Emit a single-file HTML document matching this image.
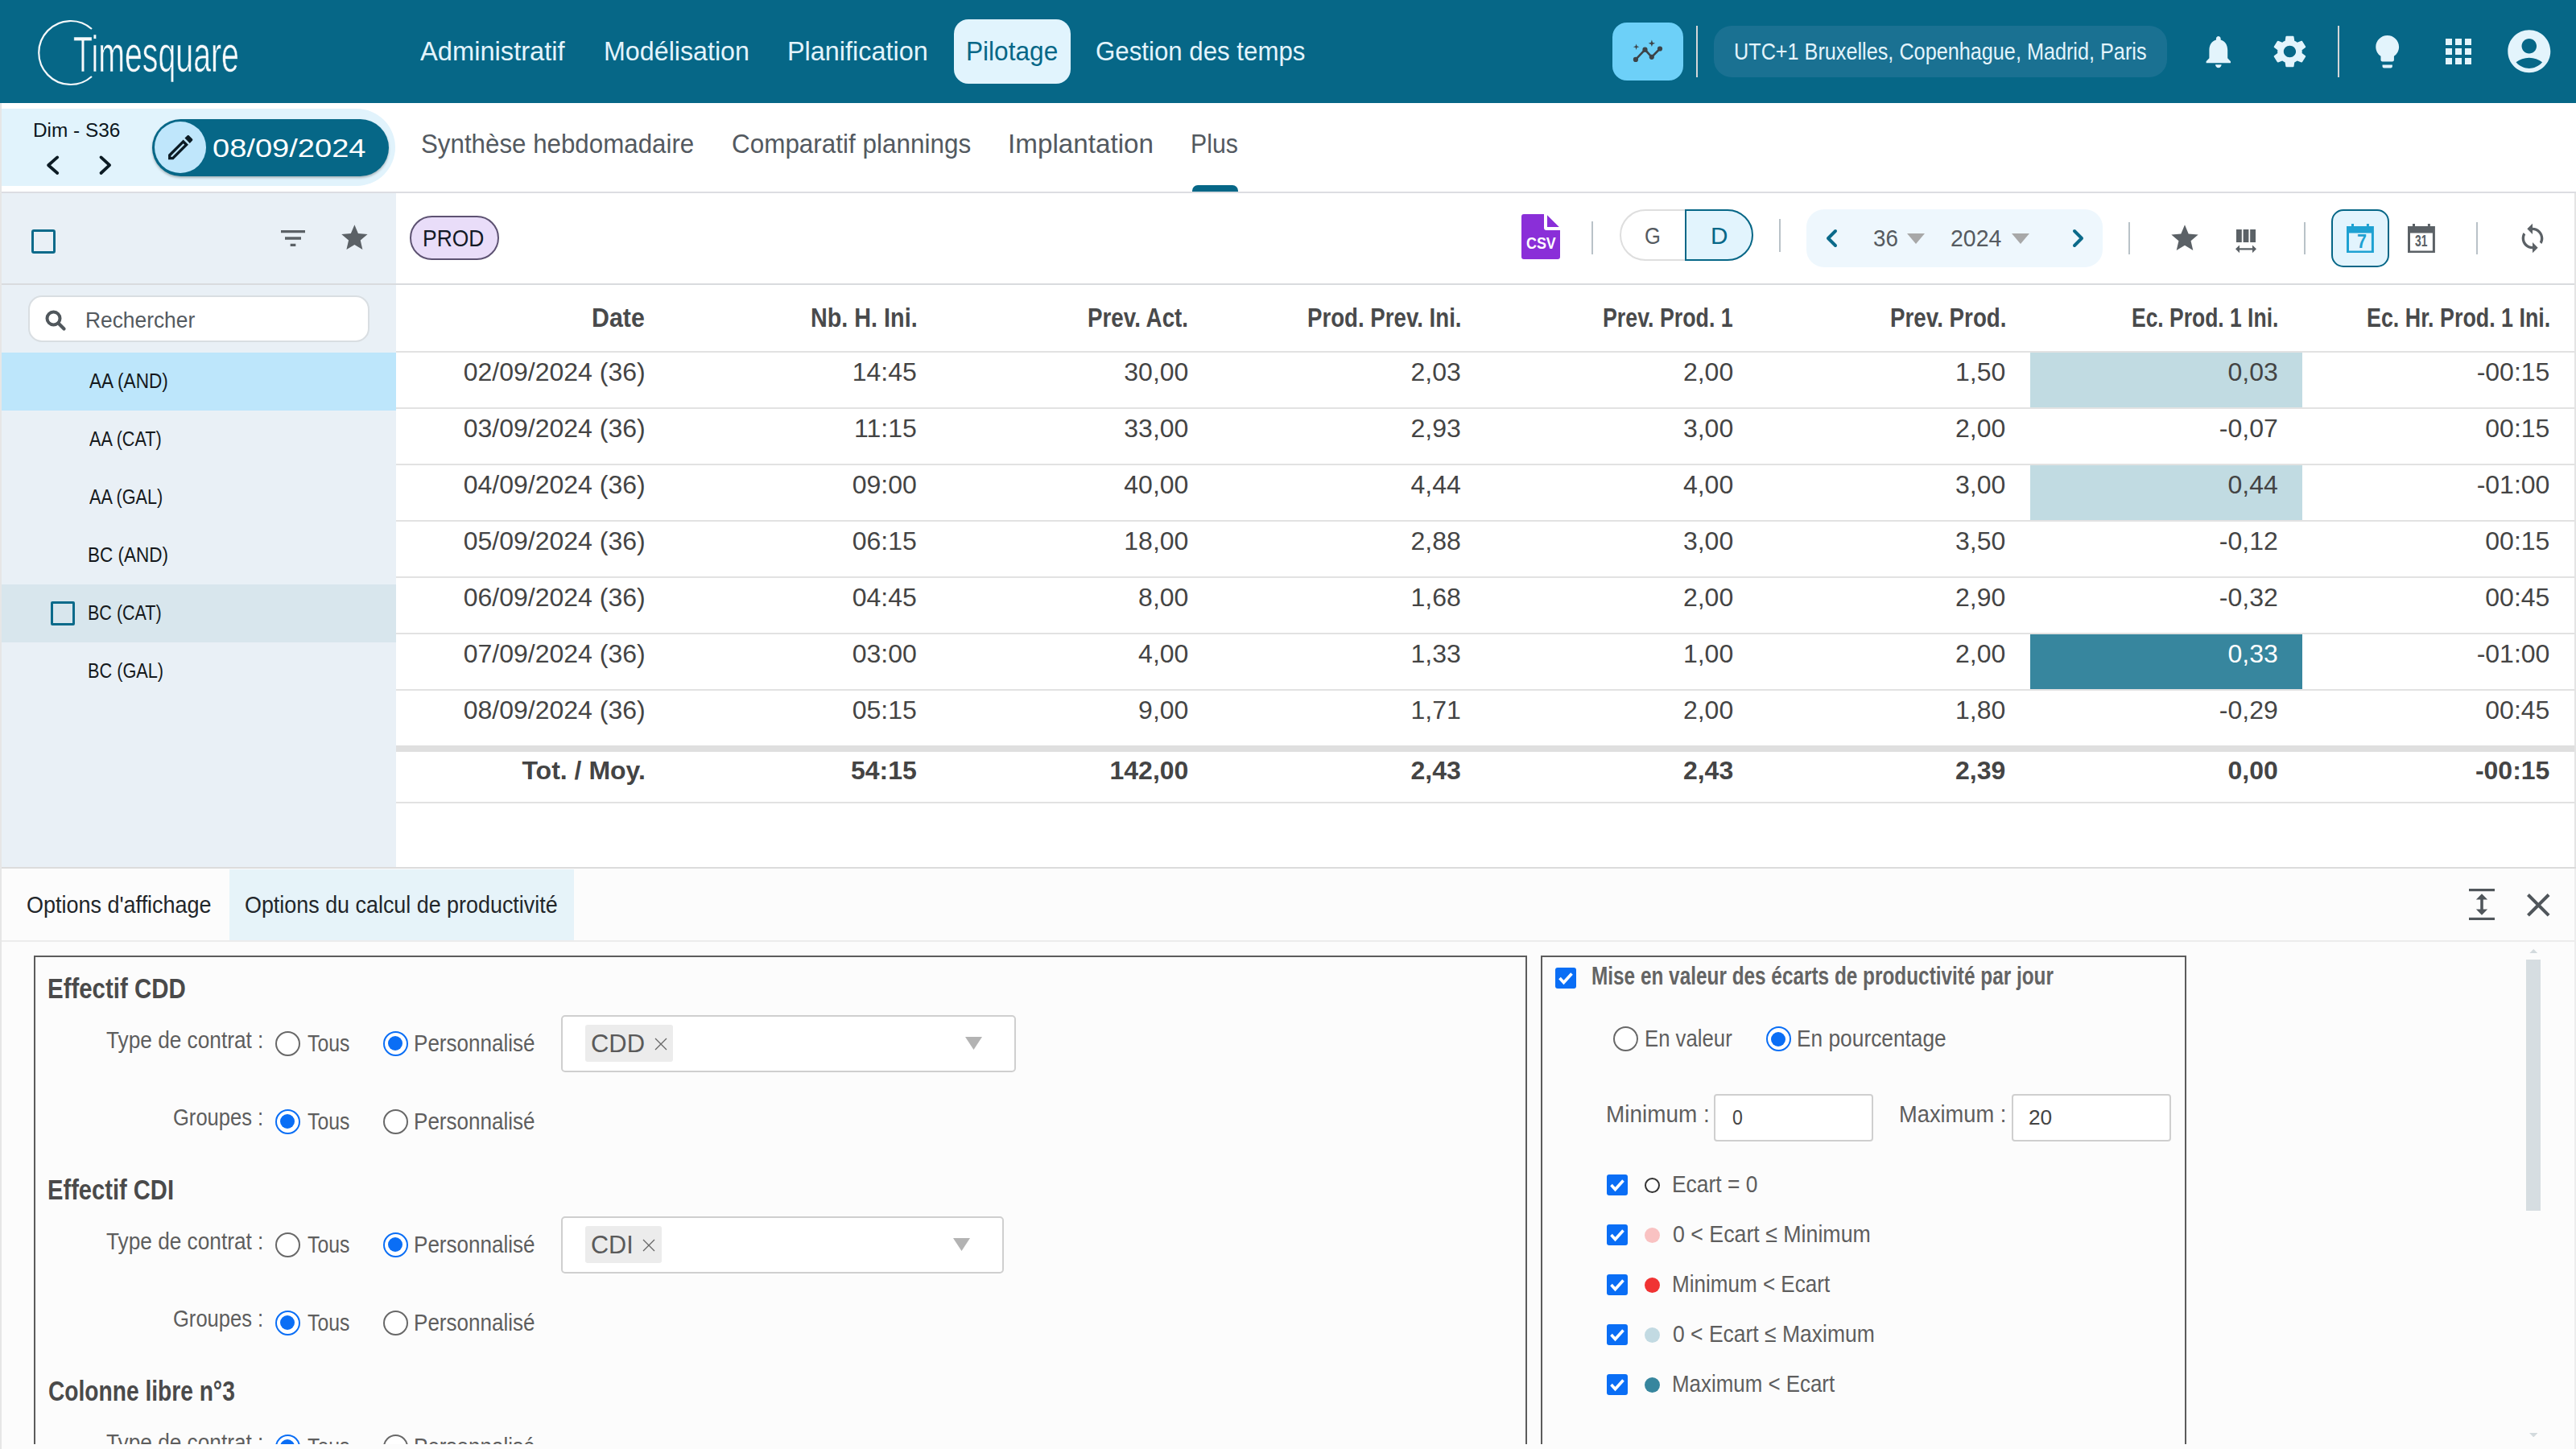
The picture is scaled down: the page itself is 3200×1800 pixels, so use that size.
<!DOCTYPE html>
<html><head><meta charset="utf-8"><title>Timesquare</title>
<style>
html,body{margin:0;padding:0;width:3200px;height:1800px;overflow:hidden;background:#fff;}
body{position:relative;font-family:"Liberation Sans", sans-serif;}
div{position:absolute;box-sizing:border-box;}
.t{white-space:nowrap;transform-origin:0 0;}
</style></head><body>
<div style="left:0px;top:0px;width:3200px;height:128px;background:#066787;"></div>
<svg style="position:absolute;left:40px;top:20px;width:100px;height:90px;" viewBox="40 20 100 90" preserveAspectRatio="none"><path d="M 114 36 A 39.5 39.5 0 1 0 114 95" fill="none" stroke="#f4f8fa" stroke-width="2.2"/></svg>
<div class="t" style="top:35.66px;font-size:63px;line-height:63px;color:#f6f9fb;font-weight:400;font-family:'Liberation Sans', sans-serif;left:91.38px;transform:scaleX(0.6234);-webkit-text-stroke:0.7px #066787;">Timesquare</div>
<div class="t" style="top:47.06px;font-size:33px;line-height:33px;color:#e3f4fc;font-weight:400;font-family:'Liberation Sans', sans-serif;left:522.30px;transform:scaleX(0.9897);">Administratif</div>
<div class="t" style="top:47.06px;font-size:33px;line-height:33px;color:#e3f4fc;font-weight:400;font-family:'Liberation Sans', sans-serif;left:750.35px;transform:scaleX(0.9768);">Modélisation</div>
<div class="t" style="top:47.06px;font-size:33px;line-height:33px;color:#e3f4fc;font-weight:400;font-family:'Liberation Sans', sans-serif;left:978.04px;transform:scaleX(0.9818);">Planification</div>
<div style="left:1185px;top:24px;width:145px;height:80px;background:#e1f4fd;border-radius:18px;"></div>
<div class="t" style="top:47.06px;font-size:33px;line-height:33px;color:#066787;font-weight:400;font-family:'Liberation Sans', sans-serif;left:1200.08px;transform:scaleX(0.9577);">Pilotage</div>
<div class="t" style="top:47.06px;font-size:33px;line-height:33px;color:#e3f4fc;font-weight:400;font-family:'Liberation Sans', sans-serif;left:1361.05px;transform:scaleX(0.9465);">Gestion des temps</div>
<div style="left:2003px;top:28px;width:88px;height:72px;background:#6dd0f8;border-radius:18px;"></div>
<svg style="position:absolute;left:2010px;top:35px;width:80px;height:60px;" viewBox="0 0 80 60" preserveAspectRatio="none"><polyline points="21.9,38.9 33.5,26.7 41.8,35.8 52,25.5" fill="none" stroke="#3d4347" stroke-width="2.6" stroke-linejoin="round"/><circle cx="21.9" cy="38.9" r="3.1" fill="#3d4347"/><circle cx="33.5" cy="26.7" r="3.1" fill="#3d4347"/><circle cx="41.8" cy="35.8" r="3.1" fill="#3d4347"/><circle cx="52" cy="25.5" r="3.1" fill="#3d4347"/><path d="M22.6 19.4 L23.5 22.3 L26.400000000000002 23.2 L23.5 24.099999999999998 L22.6 27.0 L21.700000000000003 24.099999999999998 L18.8 23.2 L21.700000000000003 22.3Z" fill="#3d4347"/><path d="M41.9 14.600000000000001 L43.0 17.7 L46.1 18.8 L43.0 19.900000000000002 L41.9 23.0 L40.8 19.900000000000002 L37.699999999999996 18.8 L40.8 17.7Z" fill="#3d4347"/></svg>
<div style="left:2107px;top:32px;width:2px;height:64px;background:#d4d6d8;"></div>
<div style="left:2129px;top:32px;width:563px;height:64px;background:#1a7192;border-radius:22px;"></div>
<div class="t" style="top:48.60px;font-size:30px;line-height:30px;color:#e3f4fc;font-weight:400;font-family:'Liberation Sans', sans-serif;left:2154.32px;transform:scaleX(0.8409);">UTC+1 Bruxelles, Copenhague, Madrid, Paris</div>
<svg style="position:absolute;left:2733px;top:39.9px;width:45.59999999999991px;height:48.4px;" viewBox="0 0 24 24" preserveAspectRatio="none"><path d="M12 22c1.1 0 2-.9 2-2h-4c0 1.1.89 2 2 2zm6-6v-5c0-3.07-1.64-5.64-4.5-6.32V4c0-.83-.67-1.5-1.5-1.5s-1.5.67-1.5 1.5v.68C7.63 5.36 6 7.920 6 11v5l-2 2v1h16v-1l-2-2z" fill="#e3f4fc"/></svg>
<svg style="position:absolute;left:2818.5px;top:40px;width:50.90000000000009px;height:48.2px;" viewBox="0 0 24 24" preserveAspectRatio="none"><path d="M19.14 12.94c.04-.3.06-.61.06-.94 0-.32-.02-.64-.07-.94l2.03-1.58c.18-.14.23-.41.12-.61l-1.92-3.32c-.12-.22-.37-.29-.59-.22l-2.39.96c-.5-.38-1.03-.7-1.62-.94l-.36-2.54c-.04-.24-.24-.41-.48-.41h-3.84c-.24 0-.43.17-.47.41l-.36 2.54c-.59.24-1.13.57-1.62.94l-2.39-.96c-.22-.08-.47 0-.59.22L2.740 8.87c-.12.21-.08.47.12.61l2.03 1.58c-.05.3-.09.63-.09.94s.02.64.07.94l-2.03 1.58c-.18.14-.23.41-.12.61l1.92 3.32c.12.22.37.29.59.22l2.39-.96c.5.38 1.03.7 1.62.94l.36 2.54c.05.24.24.41.48.41h3.84c.24 0 .44-.17.47-.41l.36-2.54c.59-.24 1.13-.56 1.62-.94l2.39.96c.22.08.47 0 .59-.22l1.92-3.32c.12-.22.07-.47-.12-.61l-2.01-1.58zM12 15.6c-1.98 0-3.6-1.62-3.6-3.6s1.62-3.6 3.6-3.6 3.6 1.62 3.6 3.6-1.62 3.6-3.6 3.6z" fill="#e3f4fc"/></svg>
<div style="left:2904px;top:32px;width:2px;height:64px;background:#d4d6d8;"></div>
<svg style="position:absolute;left:2941.2px;top:39.65px;width:49.40000000000009px;height:48.6px;" viewBox="0 0 24 24" preserveAspectRatio="none"><path d="M9 21c0 .55.45 1 1 1h4c.55 0 1-.45 1-1v-1H9v1zm3-19C8.14 2 5 5.14 5 9c0 2.38 1.19 4.47 3 5.74V17c0 .55.45 1 1 1h6c.55 0 1-.45 1-1v-2.26c1.81-1.27 3-3.36 3-5.74 0-3.86-3.14-7-7-7z" fill="#e3f4fc"/></svg>
<div style="left:3038px;top:48.0px;width:8px;height:8.0px;background:#e3f4fc;"></div>
<div style="left:3038px;top:60.05px;width:8px;height:8.0px;background:#e3f4fc;"></div>
<div style="left:3038px;top:72.1px;width:8px;height:8.0px;background:#e3f4fc;"></div>
<div style="left:3050px;top:48.0px;width:8px;height:8.0px;background:#e3f4fc;"></div>
<div style="left:3050px;top:60.05px;width:8px;height:8.0px;background:#e3f4fc;"></div>
<div style="left:3050px;top:72.1px;width:8px;height:8.0px;background:#e3f4fc;"></div>
<div style="left:3062px;top:48.0px;width:8px;height:8.0px;background:#e3f4fc;"></div>
<div style="left:3062px;top:60.05px;width:8px;height:8.0px;background:#e3f4fc;"></div>
<div style="left:3062px;top:72.1px;width:8px;height:8.0px;background:#e3f4fc;"></div>
<svg style="position:absolute;left:3110.1px;top:31.7px;width:63.59999999999991px;height:63.599999999999994px;" viewBox="0 0 24 24" preserveAspectRatio="none"><path d="M12 2C6.48 2 2 6.48 2 12s4.48 10 10 10 10-4.48 10-10S17.52 2 12 2zm0 4c1.93 0 3.5 1.57 3.5 3.5S13.930 13 12 13s-3.5-1.57-3.5-3.5S10.07 6 12 6zm0 14c-2.03 0-4.43-.82-6.14-2.88C7.55 15.8 9.68 15 12 15s4.45.8 6.14 2.12C16.43 19.18 14.03 20 12 20z" fill="#e3f4fc"/></svg>
<div style="left:0px;top:128px;width:2px;height:1672px;background:#e6e6e6;"></div>
<div style="left:2px;top:135px;width:489px;height:96px;background:#e1f3fc;border-radius:0 48px 48px 0;"></div>
<div class="t" style="top:150.73px;font-size:23px;line-height:23px;color:#0c1620;font-weight:400;font-family:'Liberation Sans', sans-serif;left:40.54px;transform:scaleX(1.0592);">Dim - S36</div>
<svg style="position:absolute;left:40px;top:180px;width:120px;height:50px;" viewBox="40 180 120 50" preserveAspectRatio="none"><polyline points="71.25,195.4 60.1,205.2 71.25,215" fill="none" stroke="#0c1b24" stroke-width="3.8" stroke-linecap="round" stroke-linejoin="round"/><polyline points="125.5,195.4 136.1,205.2 125.5,215" fill="none" stroke="#0c1b24" stroke-width="3.8" stroke-linecap="round" stroke-linejoin="round"/></svg>
<div style="left:189px;top:147.5px;width:294px;height:71.5px;background:#066787;border-radius:36px;box-shadow:0 2px 3px rgba(0,0,0,0.25);"></div>
<div style="left:192px;top:151px;width:64px;height:64px;background:#bfe6fb;border-radius:50%;"></div>
<svg style="position:absolute;left:203.7px;top:163px;width:40.400000000000006px;height:40.400000000000006px;" viewBox="0 0 24 24" preserveAspectRatio="none"><path d="M3 17.25V21h3.75L17.81 9.94l-3.75-3.75L3 17.25zM5.92 19H5v-.92l9.06-9.06.92.92L5.92 19zM20.71 5.63l-2.34-2.34c-.2-.2-.45-.29-.71-.29s-.51.1-.7.29l-1.83 1.83 3.75 3.75 1.83-1.83c.39-.39.39-1.02 0-1.41z" fill="#0c1b24"/></svg>
<div class="t" style="top:167.61px;font-size:32px;line-height:32px;color:#ffffff;font-weight:400;font-family:'Liberation Sans', sans-serif;left:263.81px;transform:scaleX(1.1897);">08/09/2024</div>
<div class="t" style="top:162.06px;font-size:33px;line-height:33px;color:#535960;font-weight:400;font-family:'Liberation Sans', sans-serif;left:523.05px;transform:scaleX(0.9482);">Synthèse hebdomadaire</div>
<div class="t" style="top:162.06px;font-size:33px;line-height:33px;color:#535960;font-weight:400;font-family:'Liberation Sans', sans-serif;left:909.05px;transform:scaleX(0.9528);">Comparatif plannings</div>
<div class="t" style="top:162.06px;font-size:33px;line-height:33px;color:#535960;font-weight:400;font-family:'Liberation Sans', sans-serif;left:1252.38px;transform:scaleX(1.0067);">Implantation</div>
<div class="t" style="top:162.06px;font-size:33px;line-height:33px;color:#535960;font-weight:400;font-family:'Liberation Sans', sans-serif;left:1479.17px;transform:scaleX(0.9174);">Plus</div>
<div style="left:1481px;top:230px;width:57px;height:10px;background:#066787;border-radius:7px 7px 0 0;"></div>
<div style="left:2px;top:238px;width:3198px;height:2px;background:#dcdde2;"></div>
<div style="left:2px;top:240px;width:490px;height:837px;background:#e9f0f6;"></div>
<div style="left:39px;top:285px;width:30px;height:30px;border:3px solid #0b6a8a;border-radius:3px;box-sizing:border-box;"></div>
<svg style="position:absolute;left:344px;top:276px;width:40px;height:40px;" viewBox="0 0 24 24" preserveAspectRatio="none"><path d="M10 18h4v-2h-4v2zM3 6v2h18V6H3zm3 7h12v-2H6v2z" fill="#5b6166"/></svg>
<svg style="position:absolute;left:420.5px;top:276.3px;width:38.80000000000001px;height:38.80000000000001px;" viewBox="0 0 24 24" preserveAspectRatio="none"><path d="M12 17.27L18.18 21l-1.64-7.03L22 9.24l-7.19-.61L12 2 9.19 8.63 2 9.24l5.46 4.73L5.82 21z" fill="#5b6166"/></svg>
<div style="left:2px;top:352px;width:3196px;height:2px;background:#d5d8dc;"></div>
<div style="left:34.5px;top:366.6px;width:424.5px;height:58.39999999999998px;background:#fff;border:2px solid #d9dee2;border-radius:17px;box-sizing:border-box;"></div>
<svg style="position:absolute;left:55px;top:384px;width:28px;height:28px;" viewBox="0 0 28 28" preserveAspectRatio="none"><circle cx="11.5" cy="11.5" r="8" fill="none" stroke="#50575c" stroke-width="4"/><line x1="17.5" y1="17.5" x2="24.5" y2="24.5" stroke="#50575c" stroke-width="4.2" stroke-linecap="round"/></svg>
<div class="t" style="top:383.89px;font-size:28px;line-height:28px;color:#545a5f;font-weight:400;font-family:'Liberation Sans', sans-serif;left:105.82px;transform:scaleX(0.9410);">Rechercher</div>
<div style="left:2px;top:438px;width:490px;height:72px;background:#bde6fb;"></div>
<div class="t" style="top:461.13px;font-size:25px;line-height:25px;color:#15191c;font-weight:400;font-family:'Liberation Sans', sans-serif;left:110.80px;transform:scaleX(0.9022);">AA (AND)</div>
<div class="t" style="top:533.13px;font-size:25px;line-height:25px;color:#15191c;font-weight:400;font-family:'Liberation Sans', sans-serif;left:110.80px;transform:scaleX(0.8645);">AA (CAT)</div>
<div class="t" style="top:605.13px;font-size:25px;line-height:25px;color:#15191c;font-weight:400;font-family:'Liberation Sans', sans-serif;left:110.80px;transform:scaleX(0.8633);">AA (GAL)</div>
<div class="t" style="top:677.13px;font-size:25px;line-height:25px;color:#15191c;font-weight:400;font-family:'Liberation Sans', sans-serif;left:109.00px;transform:scaleX(0.8990);">BC (AND)</div>
<div style="left:2px;top:726px;width:490px;height:72px;background:#d8e6ed;"></div>
<div style="left:63px;top:747px;width:30px;height:30px;border:3px solid #0b6a8a;border-radius:2px;box-sizing:border-box;"></div>
<div class="t" style="top:749.13px;font-size:25px;line-height:25px;color:#15191c;font-weight:400;font-family:'Liberation Sans', sans-serif;left:109.08px;transform:scaleX(0.8609);">BC (CAT)</div>
<div class="t" style="top:821.13px;font-size:25px;line-height:25px;color:#15191c;font-weight:400;font-family:'Liberation Sans', sans-serif;left:109.06px;transform:scaleX(0.8684);">BC (GAL)</div>
<div style="left:492px;top:240px;width:2706px;height:837px;background:#fff;"></div>
<div style="left:3198px;top:240px;width:2px;height:837px;background:#e4e4e4;"></div>
<div style="left:2px;top:352px;width:3196px;height:2px;background:#d9dbde;"></div>
<div style="left:508.5px;top:268.2px;width:111.10000000000002px;height:55.30000000000001px;background:#e9ddf9;border:2px solid #5d5272;border-radius:28px;box-sizing:border-box;"></div>
<div class="t" style="top:281.75px;font-size:29px;line-height:29px;color:#131a26;font-weight:400;font-family:'Liberation Sans', sans-serif;left:525.38px;transform:scaleX(0.9116);">PROD</div>
<svg style="position:absolute;left:1890.4px;top:266px;width:48.0px;height:56px;" viewBox="0 0 48 56" preserveAspectRatio="none"><path d="M3 0 H28 V17 Q28 20 31 20 H48 V53 Q48 56 45 56 H3 Q0 56 0 53 V3 Q0 0 3 0Z" fill="#8a2fd8"/><path d="M32 1.2 V16 H46.8Z" fill="#8a2fd8"/></svg>
<div class="t" style="top:291.32px;font-size:21px;line-height:21px;color:#ffffff;font-weight:700;font-family:'Liberation Sans', sans-serif;left:1895.80px;transform:scaleX(0.8524);">CSV</div>
<div style="left:1976.5px;top:275px;width:2.0px;height:41px;background:#b9c2c8;"></div>
<div style="left:2011.5px;top:260px;width:166.5px;height:64px;border:2px solid #dedede;border-radius:32px;box-sizing:border-box;"></div>
<div style="left:2093px;top:260px;width:85px;height:64px;background:#e2f4fd;border:2.5px solid #066787;border-radius:0 32px 32px 0;box-sizing:border-box;"></div>
<div class="t" style="top:278.95px;font-size:29px;line-height:29px;color:#555a60;font-weight:400;font-family:'Liberation Sans', sans-serif;left:2042.92px;transform:scaleX(0.8800);">G</div>
<div class="t" style="top:278.95px;font-size:29px;line-height:29px;color:#066787;font-weight:400;font-family:'Liberation Sans', sans-serif;left:2124.96px;transform:scaleX(1.0222);">D</div>
<div style="left:2210px;top:272px;width:2px;height:41px;background:#b9c2c8;"></div>
<div style="left:2244px;top:260px;width:368px;height:72px;background:#eef7fd;border-radius:22px;"></div>
<svg style="position:absolute;left:2265px;top:284px;width:22px;height:24px;" viewBox="0 0 22 24" preserveAspectRatio="none"><polyline points="15,3 6,12 15,21" fill="none" stroke="#0b6a8a" stroke-width="4" stroke-linecap="round" stroke-linejoin="round"/></svg>
<svg style="position:absolute;left:2570px;top:284px;width:22px;height:24px;" viewBox="0 0 22 24" preserveAspectRatio="none"><polyline points="7,3 16,12 7,21" fill="none" stroke="#0b6a8a" stroke-width="4" stroke-linecap="round" stroke-linejoin="round"/></svg>
<div class="t" style="top:281.20px;font-size:30px;line-height:30px;color:#555a60;font-weight:400;font-family:'Liberation Sans', sans-serif;left:2327.08px;transform:scaleX(0.9247);">36</div>
<svg style="position:absolute;left:2369px;top:290px;width:22px;height:13px;" viewBox="0 0 22 13" preserveAspectRatio="none"><path d="M0 0H22L11 13Z" fill="#a8a8a8"/></svg>
<div class="t" style="top:281.20px;font-size:30px;line-height:30px;color:#555a60;font-weight:400;font-family:'Liberation Sans', sans-serif;left:2423.05px;transform:scaleX(0.9484);">2024</div>
<svg style="position:absolute;left:2499px;top:290px;width:22px;height:13px;" viewBox="0 0 22 13" preserveAspectRatio="none"><path d="M0 0H22L11 13Z" fill="#a8a8a8"/></svg>
<div style="left:2644px;top:276px;width:2px;height:40px;background:#b9c2c8;"></div>
<svg style="position:absolute;left:2694px;top:276px;width:40px;height:40px;" viewBox="0 0 24 24" preserveAspectRatio="none"><path d="M12 17.27L18.18 21l-1.64-7.03L22 9.24l-7.19-.61L12 2 9.19 8.63 2 9.24l5.46 4.73L5.82 21z" fill="#5b6166"/></svg>
<svg style="position:absolute;left:2777px;top:285px;width:26px;height:29.19999999999999px;" viewBox="0 0 26 29.2" preserveAspectRatio="none"><rect x="1" y="0" width="6.8" height="16" fill="#5b6166"/><rect x="9.6" y="0" width="6.8" height="16" fill="#5b6166"/><rect x="18.2" y="0" width="6.8" height="16" fill="#5b6166"/><path d="M0 24.35 L5 19.5 V23.25 H21 V19.5 L26 24.35 L21 29.2 V25.45 H5 V29.2Z" fill="#5b6166"/></svg>
<div style="left:2862px;top:276px;width:2px;height:40px;background:#b9c2c8;"></div>
<div style="left:2896px;top:260px;width:72px;height:72px;background:#e2f4fd;border:2.5px solid #066787;border-radius:15px;box-sizing:border-box;"></div>
<svg style="position:absolute;left:2914.9px;top:277.9px;width:33.90000000000009px;height:36.30000000000001px;" viewBox="0 0 33.9 36.3" preserveAspectRatio="none"><rect x="6" y="0" width="3" height="5" fill="#1ea1d2"/><rect x="24.9" y="0" width="3" height="5" fill="#1ea1d2"/><path d="M0 2.9 H33.9 V36.3 H0Z M3 11.6 V33.4 H30.9 V11.6Z" fill="#1ea1d2" fill-rule="evenodd"/></svg>
<div class="t" style="top:288.93px;font-size:23px;line-height:23px;color:#1ea1d2;font-weight:700;font-family:'Liberation Sans', sans-serif;left:2927.50px;transform:scaleX(0.9333);">7</div>
<svg style="position:absolute;left:2991.4px;top:277.9px;width:33.90000000000009px;height:36.30000000000001px;" viewBox="0 0 33.9 36.3" preserveAspectRatio="none"><rect x="6" y="0" width="3" height="5" fill="#5b6166"/><rect x="24.9" y="0" width="3" height="5" fill="#5b6166"/><path d="M0 2.9 H33.9 V36.3 H0Z M3 11.6 V33.4 H30.9 V11.6Z" fill="#5b6166" fill-rule="evenodd"/></svg>
<div class="t" style="top:290.49px;font-size:19.5px;line-height:19.5px;color:#5b6166;font-weight:700;font-family:'Liberation Sans', sans-serif;left:3000.30px;transform:scaleX(0.7095);">31</div>
<div style="left:3076px;top:276px;width:2px;height:40px;background:#b9c2c8;"></div>
<svg style="position:absolute;left:3126px;top:276px;width:40px;height:40px;" viewBox="0 0 24 24" preserveAspectRatio="none"><path d="M12 4V1L8 5l4 4V6c3.31 0 6 2.69 6 6 0 1.01-.25 1.97-.7 2.8l1.46 1.46C19.54 15.03 20 13.57 20 12c0-4.42-3.58-8-8-8zm0 14c-3.31 0-6-2.69-6-6 0-1.01.25-1.97.7-2.8L5.24 7.74C4.46 8.97 4 10.43 4 12c0 4.42 3.58 8 8 8v3l4-4-4-4v3z" fill="#5b6166"/></svg>
<div class="t" style="top:377.86px;font-size:33px;line-height:33px;color:#494a4b;font-weight:700;font-family:'Liberation Sans', sans-serif;left:734.56px;transform:scaleX(0.9194);">Date</div>
<div class="t" style="top:377.86px;font-size:33px;line-height:33px;color:#494a4b;font-weight:700;font-family:'Liberation Sans', sans-serif;left:1007.26px;transform:scaleX(0.8717);">Nb. H. Ini.</div>
<div class="t" style="top:377.86px;font-size:33px;line-height:33px;color:#494a4b;font-weight:700;font-family:'Liberation Sans', sans-serif;left:1351.32px;transform:scaleX(0.8419);">Prev. Act.</div>
<div class="t" style="top:377.86px;font-size:33px;line-height:33px;color:#494a4b;font-weight:700;font-family:'Liberation Sans', sans-serif;left:1624.32px;transform:scaleX(0.8376);">Prod. Prev. Ini.</div>
<div class="t" style="top:377.86px;font-size:33px;line-height:33px;color:#494a4b;font-weight:700;font-family:'Liberation Sans', sans-serif;left:1990.98px;transform:scaleX(0.8114);">Prev. Prod. 1</div>
<div class="t" style="top:377.86px;font-size:33px;line-height:33px;color:#494a4b;font-weight:700;font-family:'Liberation Sans', sans-serif;left:2347.82px;transform:scaleX(0.8412);">Prev. Prod.</div>
<div class="t" style="top:377.86px;font-size:33px;line-height:33px;color:#494a4b;font-weight:700;font-family:'Liberation Sans', sans-serif;left:2648.40px;transform:scaleX(0.8019);">Ec. Prod. 1 Ini.</div>
<div class="t" style="top:377.86px;font-size:33px;line-height:33px;color:#494a4b;font-weight:700;font-family:'Liberation Sans', sans-serif;left:2940.07px;transform:scaleX(0.8136);">Ec. Hr. Prod. 1 Ini.</div>
<div style="left:492px;top:436px;width:2706px;height:2px;background:#e2e2e2;"></div>
<div style="left:492px;top:506px;width:2706px;height:2px;background:#e2e2e2;"></div>
<div style="left:492px;top:576px;width:2706px;height:2px;background:#e2e2e2;"></div>
<div style="left:492px;top:646px;width:2706px;height:2px;background:#e2e2e2;"></div>
<div style="left:492px;top:716px;width:2706px;height:2px;background:#e2e2e2;"></div>
<div style="left:492px;top:786px;width:2706px;height:2px;background:#e2e2e2;"></div>
<div style="left:492px;top:856px;width:2706px;height:2px;background:#e2e2e2;"></div>
<div style="left:492px;top:926px;width:2706px;height:8px;background:#dfdfdf;"></div>
<div style="left:492px;top:996px;width:2706px;height:2px;background:#e2e2e2;"></div>
<div style="left:2522px;top:438px;width:338px;height:68px;background:#c1dbe2;"></div>
<div style="left:2522px;top:578px;width:338px;height:68px;background:#c1dbe2;"></div>
<div style="left:2522px;top:788px;width:338px;height:68px;background:#37869e;"></div>
<div class="t" style="top:446.01px;font-size:32px;line-height:32px;color:#444;font-weight:400;font-family:'Liberation Sans', sans-serif;left:575.70px;">02/09/2024 (36)</div>
<div class="t" style="top:446.01px;font-size:32px;line-height:32px;color:#444;font-weight:400;font-family:'Liberation Sans', sans-serif;left:1058.72px;">14:45</div>
<div class="t" style="top:446.01px;font-size:32px;line-height:32px;color:#444;font-weight:400;font-family:'Liberation Sans', sans-serif;left:1396.32px;">30,00</div>
<div class="t" style="top:446.01px;font-size:32px;line-height:32px;color:#444;font-weight:400;font-family:'Liberation Sans', sans-serif;left:1752.52px;">2,03</div>
<div class="t" style="top:446.01px;font-size:32px;line-height:32px;color:#444;font-weight:400;font-family:'Liberation Sans', sans-serif;left:2090.92px;">2,00</div>
<div class="t" style="top:446.01px;font-size:32px;line-height:32px;color:#444;font-weight:400;font-family:'Liberation Sans', sans-serif;left:2429.02px;">1,50</div>
<div class="t" style="top:446.01px;font-size:32px;line-height:32px;color:#444;font-weight:400;font-family:'Liberation Sans', sans-serif;left:2767.52px;">0,03</div>
<div class="t" style="top:446.01px;font-size:32px;line-height:32px;color:#444;font-weight:400;font-family:'Liberation Sans', sans-serif;left:3076.66px;">-00:15</div>
<div class="t" style="top:516.01px;font-size:32px;line-height:32px;color:#444;font-weight:400;font-family:'Liberation Sans', sans-serif;left:575.70px;">03/09/2024 (36)</div>
<div class="t" style="top:516.01px;font-size:32px;line-height:32px;color:#444;font-weight:400;font-family:'Liberation Sans', sans-serif;left:1061.09px;">11:15</div>
<div class="t" style="top:516.01px;font-size:32px;line-height:32px;color:#444;font-weight:400;font-family:'Liberation Sans', sans-serif;left:1396.32px;">33,00</div>
<div class="t" style="top:516.01px;font-size:32px;line-height:32px;color:#444;font-weight:400;font-family:'Liberation Sans', sans-serif;left:1752.52px;">2,93</div>
<div class="t" style="top:516.01px;font-size:32px;line-height:32px;color:#444;font-weight:400;font-family:'Liberation Sans', sans-serif;left:2090.92px;">3,00</div>
<div class="t" style="top:516.01px;font-size:32px;line-height:32px;color:#444;font-weight:400;font-family:'Liberation Sans', sans-serif;left:2429.02px;">2,00</div>
<div class="t" style="top:516.01px;font-size:32px;line-height:32px;color:#444;font-weight:400;font-family:'Liberation Sans', sans-serif;left:2756.86px;">-0,07</div>
<div class="t" style="top:516.01px;font-size:32px;line-height:32px;color:#444;font-weight:400;font-family:'Liberation Sans', sans-serif;left:3087.32px;">00:15</div>
<div class="t" style="top:586.01px;font-size:32px;line-height:32px;color:#444;font-weight:400;font-family:'Liberation Sans', sans-serif;left:575.70px;">04/09/2024 (36)</div>
<div class="t" style="top:586.01px;font-size:32px;line-height:32px;color:#444;font-weight:400;font-family:'Liberation Sans', sans-serif;left:1058.72px;">09:00</div>
<div class="t" style="top:586.01px;font-size:32px;line-height:32px;color:#444;font-weight:400;font-family:'Liberation Sans', sans-serif;left:1396.32px;">40,00</div>
<div class="t" style="top:586.01px;font-size:32px;line-height:32px;color:#444;font-weight:400;font-family:'Liberation Sans', sans-serif;left:1752.52px;">4,44</div>
<div class="t" style="top:586.01px;font-size:32px;line-height:32px;color:#444;font-weight:400;font-family:'Liberation Sans', sans-serif;left:2090.92px;">4,00</div>
<div class="t" style="top:586.01px;font-size:32px;line-height:32px;color:#444;font-weight:400;font-family:'Liberation Sans', sans-serif;left:2429.02px;">3,00</div>
<div class="t" style="top:586.01px;font-size:32px;line-height:32px;color:#444;font-weight:400;font-family:'Liberation Sans', sans-serif;left:2767.52px;">0,44</div>
<div class="t" style="top:586.01px;font-size:32px;line-height:32px;color:#444;font-weight:400;font-family:'Liberation Sans', sans-serif;left:3076.66px;">-01:00</div>
<div class="t" style="top:656.01px;font-size:32px;line-height:32px;color:#444;font-weight:400;font-family:'Liberation Sans', sans-serif;left:575.70px;">05/09/2024 (36)</div>
<div class="t" style="top:656.01px;font-size:32px;line-height:32px;color:#444;font-weight:400;font-family:'Liberation Sans', sans-serif;left:1058.72px;">06:15</div>
<div class="t" style="top:656.01px;font-size:32px;line-height:32px;color:#444;font-weight:400;font-family:'Liberation Sans', sans-serif;left:1396.32px;">18,00</div>
<div class="t" style="top:656.01px;font-size:32px;line-height:32px;color:#444;font-weight:400;font-family:'Liberation Sans', sans-serif;left:1752.52px;">2,88</div>
<div class="t" style="top:656.01px;font-size:32px;line-height:32px;color:#444;font-weight:400;font-family:'Liberation Sans', sans-serif;left:2090.92px;">3,00</div>
<div class="t" style="top:656.01px;font-size:32px;line-height:32px;color:#444;font-weight:400;font-family:'Liberation Sans', sans-serif;left:2429.02px;">3,50</div>
<div class="t" style="top:656.01px;font-size:32px;line-height:32px;color:#444;font-weight:400;font-family:'Liberation Sans', sans-serif;left:2756.86px;">-0,12</div>
<div class="t" style="top:656.01px;font-size:32px;line-height:32px;color:#444;font-weight:400;font-family:'Liberation Sans', sans-serif;left:3087.32px;">00:15</div>
<div class="t" style="top:726.01px;font-size:32px;line-height:32px;color:#444;font-weight:400;font-family:'Liberation Sans', sans-serif;left:575.70px;">06/09/2024 (36)</div>
<div class="t" style="top:726.01px;font-size:32px;line-height:32px;color:#444;font-weight:400;font-family:'Liberation Sans', sans-serif;left:1058.72px;">04:45</div>
<div class="t" style="top:726.01px;font-size:32px;line-height:32px;color:#444;font-weight:400;font-family:'Liberation Sans', sans-serif;left:1414.12px;">8,00</div>
<div class="t" style="top:726.01px;font-size:32px;line-height:32px;color:#444;font-weight:400;font-family:'Liberation Sans', sans-serif;left:1752.52px;">1,68</div>
<div class="t" style="top:726.01px;font-size:32px;line-height:32px;color:#444;font-weight:400;font-family:'Liberation Sans', sans-serif;left:2090.92px;">2,00</div>
<div class="t" style="top:726.01px;font-size:32px;line-height:32px;color:#444;font-weight:400;font-family:'Liberation Sans', sans-serif;left:2429.02px;">2,90</div>
<div class="t" style="top:726.01px;font-size:32px;line-height:32px;color:#444;font-weight:400;font-family:'Liberation Sans', sans-serif;left:2756.86px;">-0,32</div>
<div class="t" style="top:726.01px;font-size:32px;line-height:32px;color:#444;font-weight:400;font-family:'Liberation Sans', sans-serif;left:3087.32px;">00:45</div>
<div class="t" style="top:796.01px;font-size:32px;line-height:32px;color:#444;font-weight:400;font-family:'Liberation Sans', sans-serif;left:575.70px;">07/09/2024 (36)</div>
<div class="t" style="top:796.01px;font-size:32px;line-height:32px;color:#444;font-weight:400;font-family:'Liberation Sans', sans-serif;left:1058.72px;">03:00</div>
<div class="t" style="top:796.01px;font-size:32px;line-height:32px;color:#444;font-weight:400;font-family:'Liberation Sans', sans-serif;left:1414.12px;">4,00</div>
<div class="t" style="top:796.01px;font-size:32px;line-height:32px;color:#444;font-weight:400;font-family:'Liberation Sans', sans-serif;left:1752.52px;">1,33</div>
<div class="t" style="top:796.01px;font-size:32px;line-height:32px;color:#444;font-weight:400;font-family:'Liberation Sans', sans-serif;left:2090.92px;">1,00</div>
<div class="t" style="top:796.01px;font-size:32px;line-height:32px;color:#444;font-weight:400;font-family:'Liberation Sans', sans-serif;left:2429.02px;">2,00</div>
<div class="t" style="top:796.01px;font-size:32px;line-height:32px;color:#ffffff;font-weight:400;font-family:'Liberation Sans', sans-serif;left:2767.52px;">0,33</div>
<div class="t" style="top:796.01px;font-size:32px;line-height:32px;color:#444;font-weight:400;font-family:'Liberation Sans', sans-serif;left:3076.66px;">-01:00</div>
<div class="t" style="top:866.01px;font-size:32px;line-height:32px;color:#444;font-weight:400;font-family:'Liberation Sans', sans-serif;left:575.70px;">08/09/2024 (36)</div>
<div class="t" style="top:866.01px;font-size:32px;line-height:32px;color:#444;font-weight:400;font-family:'Liberation Sans', sans-serif;left:1058.72px;">05:15</div>
<div class="t" style="top:866.01px;font-size:32px;line-height:32px;color:#444;font-weight:400;font-family:'Liberation Sans', sans-serif;left:1414.12px;">9,00</div>
<div class="t" style="top:866.01px;font-size:32px;line-height:32px;color:#444;font-weight:400;font-family:'Liberation Sans', sans-serif;left:1752.52px;">1,71</div>
<div class="t" style="top:866.01px;font-size:32px;line-height:32px;color:#444;font-weight:400;font-family:'Liberation Sans', sans-serif;left:2090.92px;">2,00</div>
<div class="t" style="top:866.01px;font-size:32px;line-height:32px;color:#444;font-weight:400;font-family:'Liberation Sans', sans-serif;left:2429.02px;">1,80</div>
<div class="t" style="top:866.01px;font-size:32px;line-height:32px;color:#444;font-weight:400;font-family:'Liberation Sans', sans-serif;left:2756.86px;">-0,29</div>
<div class="t" style="top:866.01px;font-size:32px;line-height:32px;color:#444;font-weight:400;font-family:'Liberation Sans', sans-serif;left:3087.32px;">00:45</div>
<div class="t" style="top:941.21px;font-size:32px;line-height:32px;color:#444444;font-weight:700;font-family:'Liberation Sans', sans-serif;left:648.44px;">Tot. / Moy.</div>
<div class="t" style="top:941.21px;font-size:32px;line-height:32px;color:#444444;font-weight:700;font-family:'Liberation Sans', sans-serif;left:1056.95px;">54:15</div>
<div class="t" style="top:941.21px;font-size:32px;line-height:32px;color:#444444;font-weight:700;font-family:'Liberation Sans', sans-serif;left:1378.52px;">142,00</div>
<div class="t" style="top:941.21px;font-size:32px;line-height:32px;color:#444444;font-weight:700;font-family:'Liberation Sans', sans-serif;left:1752.52px;">2,43</div>
<div class="t" style="top:941.21px;font-size:32px;line-height:32px;color:#444444;font-weight:700;font-family:'Liberation Sans', sans-serif;left:2090.92px;">2,43</div>
<div class="t" style="top:941.21px;font-size:32px;line-height:32px;color:#444444;font-weight:700;font-family:'Liberation Sans', sans-serif;left:2429.02px;">2,39</div>
<div class="t" style="top:941.21px;font-size:32px;line-height:32px;color:#444444;font-weight:700;font-family:'Liberation Sans', sans-serif;left:2767.52px;">0,00</div>
<div class="t" style="top:941.21px;font-size:32px;line-height:32px;color:#444444;font-weight:700;font-family:'Liberation Sans', sans-serif;left:3074.90px;">-00:15</div>
<div style="left:2px;top:1077px;width:3198px;height:2px;background:#dcdcdc;"></div>
<div style="left:2px;top:1079px;width:3198px;height:721px;background:#fcfcfc;"></div>
<div style="left:285px;top:1080px;width:428px;height:88px;background:#e6f3f9;"></div>
<div class="t" style="top:1109.20px;font-size:30px;line-height:30px;color:#22262a;font-weight:400;font-family:'Liberation Sans', sans-serif;left:33.40px;transform:scaleX(0.8992);">Options d&#x27;affichage</div>
<div class="t" style="top:1109.20px;font-size:30px;line-height:30px;color:#22262a;font-weight:400;font-family:'Liberation Sans', sans-serif;left:304.40px;transform:scaleX(0.8963);">Options du calcul de productivité</div>
<div style="left:2px;top:1168px;width:3196px;height:2px;background:#ececec;"></div>
<svg style="position:absolute;left:3067px;top:1104px;width:32px;height:39px;" viewBox="0 0 36 43" preserveAspectRatio="none"><rect x="0" y="0" width="36" height="3.5" fill="#50565b"/><rect x="0" y="39.5" width="36" height="3.5" fill="#50565b"/><path d="M18 7 L26 15 H20 V28 H26 L18 36 L10 28 H16 V15 H10Z" fill="#50565b"/></svg>
<svg style="position:absolute;left:3136.7px;top:1107.7px;width:32.600000000000364px;height:32.59999999999991px;" viewBox="4 4 16 16" preserveAspectRatio="none"><path d="M19 6.41L17.59 5 12 10.59 6.41 5 5 6.41 10.59 12 5 17.590 6.41 19 12 13.41 17.59 19 19 17.59 13.41 12z" fill="#50565b"/></svg>
<div style="left:0;top:0;width:3200px;height:1794px;overflow:hidden;">
<div style="left:42px;top:1187px;width:1855px;height:713px;border:2px solid #5c5c5c;box-sizing:border-box;"></div>
<div style="left:1914px;top:1187px;width:802px;height:713px;border:2px solid #5c5c5c;box-sizing:border-box;"></div>
<div class="t" style="top:1210.37px;font-size:35px;line-height:35px;color:#4a4a4a;font-weight:700;font-family:'Liberation Sans', sans-serif;left:58.92px;transform:scaleX(0.8412);">Effectif CDD</div>
<div class="t" style="top:1278.45px;font-size:29px;line-height:29px;color:#5e5e5e;font-weight:400;font-family:'Liberation Sans', sans-serif;left:132.00px;transform:scaleX(0.9044);">Type de contrat :</div>
<div style="left:341.5px;top:1280.5px;width:31.0px;height:31.0px;border:2px solid #686868;border-radius:50%;box-sizing:border-box;background:#fff;"></div>
<div class="t" style="top:1282.45px;font-size:29px;line-height:29px;color:#5e5e5e;font-weight:400;font-family:'Liberation Sans', sans-serif;left:382.00px;transform:scaleX(0.8559);">Tous</div>
<div style="left:475.5px;top:1280.5px;width:31.0px;height:31.0px;border:2.5px solid #0a6ef5;border-radius:50%;box-sizing:border-box;background:#fff;"></div>
<div style="left:482px;top:1287px;width:18px;height:18px;background:#0a6ef5;border-radius:50%;"></div>
<div class="t" style="top:1282.45px;font-size:29px;line-height:29px;color:#5e5e5e;font-weight:400;font-family:'Liberation Sans', sans-serif;left:514.00px;transform:scaleX(0.8983);">Personnalisé</div>
<div style="left:697px;top:1261.4px;width:565.4000000000001px;height:70.59999999999991px;background:#fff;border:2px solid #cfcfcf;border-radius:5px;box-sizing:border-box;"></div>
<div style="left:726.7px;top:1273.0px;width:109.5px;height:46.40000000000009px;background:#ececec;border-radius:3px;"></div>
<div class="t" style="top:1279.91px;font-size:32px;line-height:32px;color:#5a5a5a;font-weight:400;font-family:'Liberation Sans', sans-serif;left:734.03px;transform:scaleX(0.9670);">CDD</div>
<svg style="position:absolute;left:812.7px;top:1289px;width:16.0px;height:16px;" viewBox="0 0 16 16" preserveAspectRatio="none"><path d="M1 1L15 15M15 1L1 15" stroke="#666" stroke-width="1.3"/></svg>
<svg style="position:absolute;left:1198.7px;top:1288px;width:21.0px;height:16px;" viewBox="0 0 21 16" preserveAspectRatio="none"><path d="M0 0H21L10.5 16Z" fill="#b3b3b3"/></svg>
<div class="t" style="top:1374.45px;font-size:29px;line-height:29px;color:#5e5e5e;font-weight:400;font-family:'Liberation Sans', sans-serif;left:215.12px;transform:scaleX(0.8810);">Groupes :</div>
<div style="left:341.5px;top:1377.5px;width:31.0px;height:31.0px;border:2.5px solid #0a6ef5;border-radius:50%;box-sizing:border-box;background:#fff;"></div>
<div style="left:348px;top:1384px;width:18px;height:18px;background:#0a6ef5;border-radius:50%;"></div>
<div class="t" style="top:1379.45px;font-size:29px;line-height:29px;color:#5e5e5e;font-weight:400;font-family:'Liberation Sans', sans-serif;left:382.00px;transform:scaleX(0.8559);">Tous</div>
<div style="left:475.5px;top:1377.5px;width:31.0px;height:31.0px;border:2px solid #686868;border-radius:50%;box-sizing:border-box;background:#fff;"></div>
<div class="t" style="top:1379.45px;font-size:29px;line-height:29px;color:#5e5e5e;font-weight:400;font-family:'Liberation Sans', sans-serif;left:514.00px;transform:scaleX(0.8983);">Personnalisé</div>
<div class="t" style="top:1460.37px;font-size:35px;line-height:35px;color:#4a4a4a;font-weight:700;font-family:'Liberation Sans', sans-serif;left:58.94px;transform:scaleX(0.8324);">Effectif CDI</div>
<div class="t" style="top:1528.45px;font-size:29px;line-height:29px;color:#5e5e5e;font-weight:400;font-family:'Liberation Sans', sans-serif;left:132.00px;transform:scaleX(0.9044);">Type de contrat :</div>
<div style="left:341.5px;top:1530.5px;width:31.0px;height:31.0px;border:2px solid #686868;border-radius:50%;box-sizing:border-box;background:#fff;"></div>
<div class="t" style="top:1532.45px;font-size:29px;line-height:29px;color:#5e5e5e;font-weight:400;font-family:'Liberation Sans', sans-serif;left:382.00px;transform:scaleX(0.8559);">Tous</div>
<div style="left:475.5px;top:1530.5px;width:31.0px;height:31.0px;border:2.5px solid #0a6ef5;border-radius:50%;box-sizing:border-box;background:#fff;"></div>
<div style="left:482px;top:1537px;width:18px;height:18px;background:#0a6ef5;border-radius:50%;"></div>
<div class="t" style="top:1532.45px;font-size:29px;line-height:29px;color:#5e5e5e;font-weight:400;font-family:'Liberation Sans', sans-serif;left:514.00px;transform:scaleX(0.8983);">Personnalisé</div>
<div style="left:697px;top:1511.4px;width:550.3px;height:70.59999999999991px;background:#fff;border:2px solid #cfcfcf;border-radius:5px;box-sizing:border-box;"></div>
<div style="left:726.7px;top:1523.0px;width:94.89999999999998px;height:46.40000000000009px;background:#ececec;border-radius:3px;"></div>
<div class="t" style="top:1529.91px;font-size:32px;line-height:32px;color:#5a5a5a;font-weight:400;font-family:'Liberation Sans', sans-serif;left:734.04px;transform:scaleX(0.9567);">CDI</div>
<svg style="position:absolute;left:798.1px;top:1539px;width:16.0px;height:16px;" viewBox="0 0 16 16" preserveAspectRatio="none"><path d="M1 1L15 15M15 1L1 15" stroke="#666" stroke-width="1.3"/></svg>
<svg style="position:absolute;left:1183.6px;top:1538px;width:21.0px;height:16px;" viewBox="0 0 21 16" preserveAspectRatio="none"><path d="M0 0H21L10.5 16Z" fill="#b3b3b3"/></svg>
<div class="t" style="top:1624.45px;font-size:29px;line-height:29px;color:#5e5e5e;font-weight:400;font-family:'Liberation Sans', sans-serif;left:215.12px;transform:scaleX(0.8810);">Groupes :</div>
<div style="left:341.5px;top:1627.5px;width:31.0px;height:31.0px;border:2.5px solid #0a6ef5;border-radius:50%;box-sizing:border-box;background:#fff;"></div>
<div style="left:348px;top:1634px;width:18px;height:18px;background:#0a6ef5;border-radius:50%;"></div>
<div class="t" style="top:1629.45px;font-size:29px;line-height:29px;color:#5e5e5e;font-weight:400;font-family:'Liberation Sans', sans-serif;left:382.00px;transform:scaleX(0.8559);">Tous</div>
<div style="left:475.5px;top:1627.5px;width:31.0px;height:31.0px;border:2px solid #686868;border-radius:50%;box-sizing:border-box;background:#fff;"></div>
<div class="t" style="top:1629.45px;font-size:29px;line-height:29px;color:#5e5e5e;font-weight:400;font-family:'Liberation Sans', sans-serif;left:514.00px;transform:scaleX(0.8983);">Personnalisé</div>
<div class="t" style="top:1710.37px;font-size:35px;line-height:35px;color:#4a4a4a;font-weight:700;font-family:'Liberation Sans', sans-serif;left:59.80px;transform:scaleX(0.8043);">Colonne libre n°3</div>
<div class="t" style="top:1778.45px;font-size:29px;line-height:29px;color:#5e5e5e;font-weight:400;font-family:'Liberation Sans', sans-serif;left:132.00px;transform:scaleX(0.9044);">Type de contrat :</div>
<div style="left:341.5px;top:1781.5px;width:31.0px;height:31.0px;border:2.5px solid #0a6ef5;border-radius:50%;box-sizing:border-box;background:#fff;"></div>
<div style="left:348px;top:1788px;width:18px;height:18px;background:#0a6ef5;border-radius:50%;"></div>
<div class="t" style="top:1783.45px;font-size:29px;line-height:29px;color:#5e5e5e;font-weight:400;font-family:'Liberation Sans', sans-serif;left:382.00px;transform:scaleX(0.8559);">Tous</div>
<div style="left:475.5px;top:1781.5px;width:31.0px;height:31.0px;border:2px solid #686868;border-radius:50%;box-sizing:border-box;background:#fff;"></div>
<div class="t" style="top:1783.45px;font-size:29px;line-height:29px;color:#5e5e5e;font-weight:400;font-family:'Liberation Sans', sans-serif;left:514.00px;transform:scaleX(0.8983);">Personnalisé</div>
<div style="left:1932px;top:1202px;width:26px;height:26px;background:#0a6ef5;border-radius:3px;"></div>
<svg style="position:absolute;left:1932px;top:1202px;width:26px;height:26px;" viewBox="0 0 26 26" preserveAspectRatio="none"><polyline points="5.5,13 10.5,18.5 20.5,7.5" fill="none" stroke="#fff" stroke-width="3.6"/></svg>
<div class="t" style="top:1196.75px;font-size:31px;line-height:31px;color:#646464;font-weight:700;font-family:'Liberation Sans', sans-serif;left:1976.83px;transform:scaleX(0.7857);">Mise en valeur des écarts de productivité par jour</div>
<div style="left:2003.8px;top:1275.1px;width:31.0px;height:31.0px;border:2px solid #686868;border-radius:50%;box-sizing:border-box;background:#fff;"></div>
<div class="t" style="top:1275.20px;font-size:30px;line-height:30px;color:#5e5e5e;font-weight:400;font-family:'Liberation Sans', sans-serif;left:2043.28px;transform:scaleX(0.8577);">En valeur</div>
<div style="left:2193.5px;top:1275.1px;width:31.0px;height:31.0px;border:2.5px solid #0a6ef5;border-radius:50%;box-sizing:border-box;background:#fff;"></div>
<div style="left:2200px;top:1281.6px;width:18px;height:18.0px;background:#0a6ef5;border-radius:50%;"></div>
<div class="t" style="top:1275.20px;font-size:30px;line-height:30px;color:#5e5e5e;font-weight:400;font-family:'Liberation Sans', sans-serif;left:2231.85px;transform:scaleX(0.8769);">En pourcentage</div>
<div class="t" style="top:1370.45px;font-size:29px;line-height:29px;color:#5e5e5e;font-weight:400;font-family:'Liberation Sans', sans-serif;left:1994.78px;transform:scaleX(0.9624);">Minimum :</div>
<div style="left:2129px;top:1359.3px;width:198px;height:58.700000000000045px;background:#fff;border:2px solid #cfcfcf;border-radius:4px;box-sizing:border-box;"></div>
<div class="t" style="top:1376.43px;font-size:25px;line-height:25px;color:#444;font-weight:400;font-family:'Liberation Sans', sans-serif;left:2152.00px;transform:scaleX(0.9231);">0</div>
<div class="t" style="top:1370.45px;font-size:29px;line-height:29px;color:#5e5e5e;font-weight:400;font-family:'Liberation Sans', sans-serif;left:2359.12px;transform:scaleX(0.9403);">Maximum :</div>
<div style="left:2499px;top:1359.3px;width:198px;height:58.700000000000045px;background:#fff;border:2px solid #cfcfcf;border-radius:4px;box-sizing:border-box;"></div>
<div class="t" style="top:1376.43px;font-size:25px;line-height:25px;color:#444;font-weight:400;font-family:'Liberation Sans', sans-serif;left:2519.75px;transform:scaleX(1.0500);">20</div>
<div style="left:1996px;top:1459px;width:26px;height:26px;background:#0a6ef5;border-radius:3px;"></div>
<svg style="position:absolute;left:1996px;top:1459px;width:26px;height:26px;" viewBox="0 0 26 26" preserveAspectRatio="none"><polyline points="5.5,13 10.5,18.5 20.5,7.5" fill="none" stroke="#fff" stroke-width="3.6"/></svg>
<div style="left:2042.5px;top:1462.5px;width:19.0px;height:19.0px;border:2.5px solid #333;border-radius:50%;box-sizing:border-box;"></div>
<div class="t" style="top:1455.60px;font-size:30px;line-height:30px;color:#5e5e5e;font-weight:400;font-family:'Liberation Sans', sans-serif;left:2077.24px;transform:scaleX(0.8798);">Ecart = 0</div>
<div style="left:1996px;top:1521px;width:26px;height:26px;background:#0a6ef5;border-radius:3px;"></div>
<svg style="position:absolute;left:1996px;top:1521px;width:26px;height:26px;" viewBox="0 0 26 26" preserveAspectRatio="none"><polyline points="5.5,13 10.5,18.5 20.5,7.5" fill="none" stroke="#fff" stroke-width="3.6"/></svg>
<div style="left:2042.5px;top:1524.5px;width:19.0px;height:19.0px;background:#f9c2c2;border-radius:50%;"></div>
<div class="t" style="top:1517.60px;font-size:30px;line-height:30px;color:#5e5e5e;font-weight:400;font-family:'Liberation Sans', sans-serif;left:2078.11px;transform:scaleX(0.8915);">0 &lt; Ecart ≤ Minimum</div>
<div style="left:1996px;top:1583px;width:26px;height:26px;background:#0a6ef5;border-radius:3px;"></div>
<svg style="position:absolute;left:1996px;top:1583px;width:26px;height:26px;" viewBox="0 0 26 26" preserveAspectRatio="none"><polyline points="5.5,13 10.5,18.5 20.5,7.5" fill="none" stroke="#fff" stroke-width="3.6"/></svg>
<div style="left:2042.5px;top:1586.5px;width:19.0px;height:19.0px;background:#f03333;border-radius:50%;"></div>
<div class="t" style="top:1579.60px;font-size:30px;line-height:30px;color:#5e5e5e;font-weight:400;font-family:'Liberation Sans', sans-serif;left:2077.26px;transform:scaleX(0.8684);">Minimum &lt; Ecart</div>
<div style="left:1996px;top:1645px;width:26px;height:26px;background:#0a6ef5;border-radius:3px;"></div>
<svg style="position:absolute;left:1996px;top:1645px;width:26px;height:26px;" viewBox="0 0 26 26" preserveAspectRatio="none"><polyline points="5.5,13 10.5,18.5 20.5,7.5" fill="none" stroke="#fff" stroke-width="3.6"/></svg>
<div style="left:2042.5px;top:1648.5px;width:19.0px;height:19.0px;background:#c2dae2;border-radius:50%;"></div>
<div class="t" style="top:1641.60px;font-size:30px;line-height:30px;color:#5e5e5e;font-weight:400;font-family:'Liberation Sans', sans-serif;left:2078.12px;transform:scaleX(0.8828);">0 &lt; Ecart ≤ Maximum</div>
<div style="left:1996px;top:1707px;width:26px;height:26px;background:#0a6ef5;border-radius:3px;"></div>
<svg style="position:absolute;left:1996px;top:1707px;width:26px;height:26px;" viewBox="0 0 26 26" preserveAspectRatio="none"><polyline points="5.5,13 10.5,18.5 20.5,7.5" fill="none" stroke="#fff" stroke-width="3.6"/></svg>
<div style="left:2042.5px;top:1710.5px;width:19.0px;height:19.0px;background:#37869e;border-radius:50%;"></div>
<div class="t" style="top:1703.60px;font-size:30px;line-height:30px;color:#5e5e5e;font-weight:400;font-family:'Liberation Sans', sans-serif;left:2077.27px;transform:scaleX(0.8631);">Maximum &lt; Ecart</div>
</div>
<div style="left:3138px;top:1192px;width:18px;height:312px;background:#d6dde1;"></div>
<svg style="position:absolute;left:3141.7px;top:1178.8px;width:10.600000000000364px;height:5.400000000000091px;" viewBox="0 0 14 8" preserveAspectRatio="none"><path d="M0 8H14L7 0Z" fill="#d3dadd"/></svg>
<svg style="position:absolute;left:3141.7px;top:1779.8px;width:10.600000000000364px;height:5.400000000000091px;" viewBox="0 0 14 8" preserveAspectRatio="none"><path d="M0 0H14L7 8Z" fill="#d3dadd"/></svg>
<div style="left:3198px;top:1079px;width:2px;height:721px;background:#ededed;"></div>
</body></html>
